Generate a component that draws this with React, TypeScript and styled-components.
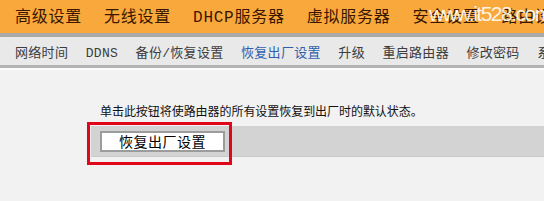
import { createGlobalStyle, styled } from "styled-components";

const GlobalStyle = createGlobalStyle`
  html, body {
    margin: 0;
    padding: 0;
    background: #f2f2f2;
  }
  body {
    font-family: "Noto Sans CJK SC", "DejaVu Sans", sans-serif;
  }
`;

const Page = styled.div`
  position: relative;
  width: 544px;
  height: 201px;
  overflow: hidden;
  background: #f2f2f2;
`;

const TopNav = styled.div`
  display: flex;
  align-items: center;
  gap: 22px;
  height: 33px;
  padding-left: 15px;
  background: #f9a93b;
  border-bottom: 4px solid #a9a9a9;
  white-space: nowrap;
`;

const NavItem = styled.div`
  font-family: "Liberation Mono", "Noto Sans CJK SC", monospace;
  font-size: 16px;
  letter-spacing: 0.75px;
  color: #3a1600;
  line-height: 33px;
  padding-top: 3px;
`;

const SubNav = styled.div`
  display: flex;
  align-items: center;
  gap: 17.5px;
  height: 28px;
  padding-left: 15px;
  background: #e9e9e9;
  border-bottom: 3px solid #b3b3b3;
  white-space: nowrap;
`;

const SubItem = styled.div<{ $active?: boolean }>`
  font-family: "Liberation Mono", "Noto Sans CJK SC", monospace;
  font-size: 13px;
  letter-spacing: 0.3px;
  line-height: 28px;
  padding-top: 5px;
  color: ${(p) => (p.$active ? "#2f5fae" : "#3c3c3c")};
`;

const Content = styled.div`
  border-top: 2px solid #fbfbfb;
  padding-top: 33px;
`;

const Notice = styled.div`
  margin-left: 100px;
  font-size: 12px;
  line-height: 16px;
  color: #111;
  letter-spacing: -0.05px;
`;

const ActionBar = styled.div`
  display: flex;
  align-items: center;
  margin: 7px 0 0 91px;
  height: 30px;
  padding-left: 9px;
  background: #d3d3d3;
  border-bottom: 1px solid #cacaca;
`;

const ResetButton = styled.button`
  width: 125px;
  height: 21px;
  padding: 0;
  background: #fff;
  border: 2px solid #9c9c9c;
  font-family: inherit;
  font-size: 14px;
  line-height: 17px;
  color: #000;
  letter-spacing: 0.5px;
`;

const Highlight = styled.div`
  position: absolute;
  left: 87px;
  top: 122px;
  width: 139px;
  height: 37px;
  border: 3px solid #e2061b;
  pointer-events: none;
`;

const Watermark = styled.div`
  position: absolute;
  left: 429px;
  top: 2px;
  font-family: "Liberation Sans", Arial, sans-serif;
  font-size: 21px;
  letter-spacing: -1.5px;
  color: rgba(255, 255, 255, 0.88);
  white-space: nowrap;
  pointer-events: none;
`;

const topItems = ["高级设置", "无线设置", "DHCP服务器", "虚拟服务器", "安全设置", "路由设置"];
const subItems = ["网络时间", "DDNS", "备份/恢复设置", "恢复出厂设置", "升级", "重启路由器", "修改密码", "系统日志"];

export default function App() {
  return (
    <Page>
      <GlobalStyle />
      <TopNav>
        {topItems.map((t) => (
          <NavItem key={t}>{t}</NavItem>
        ))}
      </TopNav>
      <SubNav>
        {subItems.map((t) => (
          <SubItem key={t} $active={t === "恢复出厂设置"}>
            {t}
          </SubItem>
        ))}
      </SubNav>
      <Content>
        <Notice>单击此按钮将使路由器的所有设置恢复到出厂时的默认状态。</Notice>
        <ActionBar>
          <ResetButton>恢复出厂设置</ResetButton>
        </ActionBar>
      </Content>
      <Highlight />
      <Watermark>www.it528.com</Watermark>
    </Page>
  );
}
